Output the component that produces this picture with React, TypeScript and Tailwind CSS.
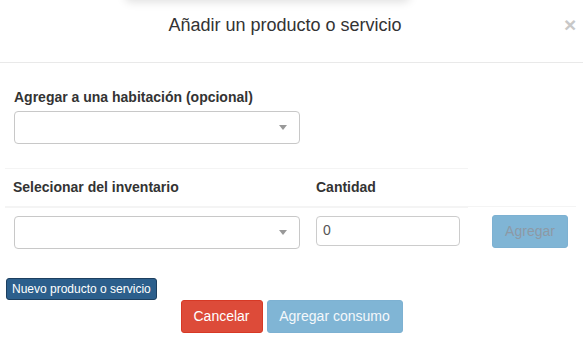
import React from "react";

function SelectBox() {
  return (
    <div className="flex h-[33px] w-[286px] items-center justify-end rounded-[4px] border border-[#c8c8c8] bg-white pr-[12px]">
      <span className="h-0 w-0 border-x-[4px] border-t-[5px] border-x-transparent border-t-[#999]" />
    </div>
  );
}

export default function App() {
  return (
    <div
      className="relative h-[347px] w-[583px] overflow-hidden bg-white text-[#333]"
      style={{ fontFamily: '"Liberation Sans", Arial, sans-serif' }}
    >
      {/* shadow of the element above */}
      <div className="absolute left-[125px] top-[-30px] h-[30px] w-[285px] rounded-b-md bg-white shadow-[0_2px_10px_rgba(0,0,0,0.13)]" />

      {/* header */}
      <div className="relative flex h-[63px] justify-center border-b border-[#e9e9e9] pr-[13px] pt-[12px]">
        <h4 className="text-[18px] leading-[26px] text-[#333]">Añadir un producto o servicio</h4>
        <span className="absolute left-[564px] top-[12px] text-[21px] font-bold leading-[26px] text-[#c8c8c8]">×</span>
      </div>

      {/* body */}
      <div className="pl-[14px] pt-[24px]">
        <label className="block text-[14px] font-bold leading-[20px]">Agregar a una habitación (opcional)</label>
        <div className="mt-[4px]">
          <SelectBox />
        </div>
      </div>

      <table className="ml-[5px] mt-[24px] w-[571px] border-collapse text-[14px]">
        <thead>
          <tr>
            <th className="h-[38px] w-[303px] border-b-2 border-t border-[#f4f4f4] px-[8px] text-left align-middle font-bold">
              Selecionar del inventario
            </th>
            <th className="h-[38px] w-[160px] border-b-2 border-t border-[#f4f4f4] px-[8px] text-left align-middle font-bold">
              Cantidad
            </th>
            <th className="w-[108px]" />
          </tr>
        </thead>
        <tbody>
          <tr>
            <td className="border-t border-[#f4f4f4] pb-[9px] pl-[9px] pt-[8px] align-top">
              <SelectBox />
            </td>
            <td className="border-t border-[#f4f4f4] px-[8px] pt-[8px] align-top">
              <div className="flex h-[30px] w-[144px] items-center rounded-[4px] border border-[#ccc] px-[6px] text-[14px] text-[#555]">
                0
              </div>
            </td>
            <td className="border-t border-[#f4f4f4] pr-[8px] pt-[8px] text-right align-top">
              <button className="h-[33px] w-[76px] rounded-[3px] border border-[#7db1d2] bg-[#80b5d5] text-[14px] text-[#8d99a5]">
                Agregar
              </button>
            </td>
          </tr>
        </tbody>
      </table>

      <div className="ml-[6px] mt-[18px]">
        <button className="h-[22px] rounded-[3px] border border-[#1d3f5f] bg-[#2c5f8c] px-[5px] text-[12px] leading-[18px] text-white">
          Nuevo producto o servicio
        </button>
      </div>

      {/* footer */}
      <div className="flex justify-center gap-[4px]">
        <button className="h-[33px] w-[82px] rounded-[3px] border border-[#d73925] bg-[#dd4b39] text-[14px] text-white">
          Cancelar
        </button>
        <button className="h-[33px] w-[136px] rounded-[3px] border border-[#7db1d2] bg-[#80b5d5] text-[14px] text-[#f4f8fb]">
          Agregar consumo
        </button>
      </div>
    </div>
  );
}
